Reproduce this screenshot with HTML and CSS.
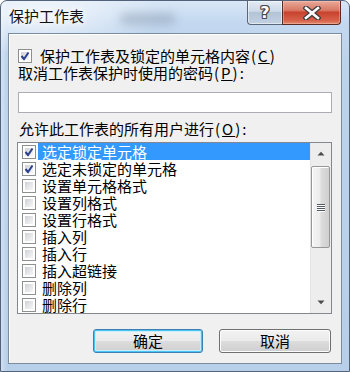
FILE: index.html
```html
<!DOCTYPE html>
<html lang="zh-CN">
<head>
<meta charset="utf-8">
<title>保护工作表</title>
<link rel="stylesheet" href="styles.css">
</head>
<body>
<div class="window">
  <div class="titlebar">
    <div class="title">保护工作表</div>
    <div class="blur-bg"></div>
    <div class="caption-btns">
      <div class="cbtn help"><span class="qm">?</span></div>
      <div class="cbtn close">
        <svg width="18" height="14" viewBox="0 0 18 14">
          <path d="M3 2 L15 12 M15 2 L3 12" stroke="#3b3b3b" stroke-width="5" stroke-linecap="square" fill="none"/>
          <path d="M3 2 L15 12 M15 2 L3 12" stroke="#ffffff" stroke-width="2.6" stroke-linecap="square" fill="none"/>
        </svg>
      </div>
    </div>
  </div>
  <div class="client">
    <div class="row-check">
      <span class="cb checked">
        <span class="cb-in"></span>
        <svg class="tick" viewBox="0 0 14 14"><path d="M3.5 7 L6 10 L10.5 3.5" stroke="#2a3f8f" stroke-width="2" fill="none"/></svg>
      </span>
      <span class="cb-text">保护工作表及锁定的单元格内容<span class="ak">(<u>C</u>)</span></span>
    </div>
    <div class="label l2">取消工作表保护时使用的密码<span class="ak">(<u>P</u>):</span></div>
    <div class="input"></div>
    <div class="label l3">允许此工作表的所有用户进行<span class="ak">(<u>O</u>):</span></div>
    <div class="listbox">
      <div class="items">
        <div class="item">
          <span class="cb checked"><span class="cb-in"></span><svg class="tick" viewBox="0 0 14 14"><path d="M3.5 7 L6 10 L10.5 3.5" stroke="#2a3f8f" stroke-width="2" fill="none"/></svg></span>
          <span class="item-text selected">选定锁定单元格</span>
        </div>
        <div class="item">
          <span class="cb checked"><span class="cb-in"></span><svg class="tick" viewBox="0 0 14 14"><path d="M3.5 7 L6 10 L10.5 3.5" stroke="#2a3f8f" stroke-width="2" fill="none"/></svg></span>
          <span class="item-text">选定未锁定的单元格</span>
        </div>
        <div class="item"><span class="cb"><span class="cb-in"></span></span><span class="item-text">设置单元格格式</span></div>
        <div class="item"><span class="cb"><span class="cb-in"></span></span><span class="item-text">设置列格式</span></div>
        <div class="item"><span class="cb"><span class="cb-in"></span></span><span class="item-text">设置行格式</span></div>
        <div class="item"><span class="cb"><span class="cb-in"></span></span><span class="item-text">插入列</span></div>
        <div class="item"><span class="cb"><span class="cb-in"></span></span><span class="item-text">插入行</span></div>
        <div class="item"><span class="cb"><span class="cb-in"></span></span><span class="item-text">插入超链接</span></div>
        <div class="item"><span class="cb"><span class="cb-in"></span></span><span class="item-text">删除列</span></div>
        <div class="item"><span class="cb"><span class="cb-in"></span></span><span class="item-text">删除行</span></div>
      </div>
      <div class="scrollbar">
        <div class="sb-arrow"><svg width="8" height="5" viewBox="0 0 8 5"><path d="M0.5 4.5 L4 0.8 L7.5 4.5 Z" fill="#4d4d4d"/></svg></div>
        <div class="sb-track">
          <div class="sb-thumb">
            <div class="grip"><i></i><i></i><i></i><i></i></div>
          </div>
        </div>
        <div class="sb-arrow"><svg width="8" height="5" viewBox="0 0 8 5"><path d="M0.5 0.5 L4 4.2 L7.5 0.5 Z" fill="#4d4d4d"/></svg></div>
      </div>
    </div>
    <div class="buttons">
      <div class="btn default"><span>确定</span></div>
      <div class="btn"><span>取消</span></div>
    </div>
  </div>
</div>
</body>
</html>
```
FILE: styles.css
```css
html, body {
  margin: 0;
  padding: 0;
  width: 350px;
  height: 372px;
  overflow: hidden;
  background: #ffffff;
}

.window {
  width: 350px;
  height: 372px;
  box-sizing: border-box;
  border: 1px solid #52627a;
  border-radius: 7px 7px 0 0;
  padding: 0 7px 7px 7px;
  display: flex;
  flex-direction: column;
  background:
    radial-gradient(ellipse 120px 40px at 40px 14px, rgba(255,255,255,0.75), rgba(255,255,255,0) 100%),
    linear-gradient(90deg, rgba(255,255,255,0.35) 0px, rgba(255,255,255,0) 6px),
    linear-gradient(180deg, #d9e7f6 0px, #c4d9f0 20px, #bcd3ec 60px, #b7cfe9 100%);
  font-family: "Noto Sans CJK SC", "Noto Sans", sans-serif;
  font-size: 15px;
  color: #000;
  position: relative;
}

.titlebar {
  height: 32px;
  display: flex;
  align-items: flex-start;
  position: relative;
}

.title {
  margin-top: 5px;
  margin-left: 1px;
  font-size: 15px;
  line-height: 20px;
  color: #111;
  text-shadow: 0 0 6px #ffffff, 0 0 10px #ffffff;
}

.blur-bg {
  position: absolute;
  left: 112px;
  top: 12px;
  width: 56px;
  height: 12px;
  background: rgba(120,135,155,0.35);
  filter: blur(4px);
  border-radius: 6px;
}

.caption-btns {
  margin-left: auto;
  display: flex;
  margin-right: 1px;
}

.cbtn {
  height: 24px;
  box-sizing: border-box;
  border: 1px solid #5a6779;
  border-top: none;
  display: flex;
  align-items: center;
  justify-content: center;
}

.help {
  width: 35px;
  border-radius: 0 0 0 4px;
  border-right: none;
  background: linear-gradient(180deg, #e3ebf4 0%, #ccd9e7 45%, #b3c4d6 50%, #c1d1e2 100%);
  box-shadow: inset 0 0 0 1px rgba(255,255,255,0.5);
}

.qm {
  font-family: "DejaVu Sans", sans-serif;
  font-weight: bold;
  font-size: 16px;
  line-height: 16px;
  color: #ffffff;
  text-shadow: 1px 0 0 #4a4a4a, -1px 0 0 #4a4a4a, 0 1px 0 #4a4a4a, 0 -1px 0 #4a4a4a,
               1px 1px 0 #4a4a4a, -1px -1px 0 #4a4a4a, 1px -1px 0 #4a4a4a, -1px 1px 0 #4a4a4a;
  margin-top: 1px;
}

.close {
  width: 59px;
  border-radius: 0 0 4px 0;
  border-color: #5b2a24;
  background: linear-gradient(180deg, #e9a999 0%, #d87a66 40%, #c8432e 50%, #d7624b 85%, #e28a6c 100%);
  box-shadow: inset 0 0 0 1px rgba(255,220,210,0.35);
}

.close svg {
  display: block;
}

.client {
  flex: 1;
  border: 1px solid #7b8ba0;
  background: #f0f0f0;
  padding: 0 9px 0 9px;
  display: flex;
  flex-direction: column;
  box-shadow: inset 1px 1px 0 #ffffff;
}

.row-check {
  margin-top: 14px;
  height: 16px;
  display: flex;
  align-items: center;
  line-height: 16px;
}

.row-check .cb {
  margin-right: 8px;
}

.cb {
  width: 14px;
  height: 14px;
  box-sizing: border-box;
  border: 1px solid #8e8f8f;
  background: #ffffff;
  padding: 2px;
  display: grid;
  flex: none;
}

.cb-in {
  grid-area: 1 / 1;
  background: linear-gradient(135deg, #cdd0d5 0%, #e4e5e8 50%, #f6f6f6 100%);
}

.tick {
  grid-area: 1 / 1;
  width: 14px;
  height: 14px;
  margin: -3px;
}

.ak {
  letter-spacing: 2px;
  margin-left: 1px;
}

.label {
  height: 17px;
  line-height: 17px;
  white-space: nowrap;
}

.l2 {
  margin-top: 0;
}

.input {
  margin-top: 11px;
  height: 21px;
  box-sizing: border-box;
  border: 1px solid #abadb3;
  border-top-color: #abadb3;
  background: #ffffff;
  width: 314px;
}

.l3 {
  margin-top: 7px;
  margin-left: 1px;
}

.listbox {
  margin-top: 5px;
  margin-left: -1px;
  width: 315px;
  height: 172px;
  box-sizing: border-box;
  border: 1px solid #828790;
  background: #ffffff;
  display: flex;
}

.items {
  flex: 1;
  display: flex;
  flex-direction: column;
}

.item {
  height: 17px;
  display: flex;
  align-items: center;
  padding-left: 4px;
}

.item .cb {
  margin-right: 2px;
}

.item-text {
  flex: 1;
  height: 17px;
  line-height: 17px;
  padding-left: 4px;
  white-space: nowrap;
}

.item-text.selected {
  background: #3399ff;
  color: #ffffff;
}

.scrollbar {
  width: 21px;
  display: flex;
  flex-direction: column;
  background: #ededed;
  border-left: 1px solid #e3e3e3;
  box-sizing: border-box;
}

.sb-arrow {
  height: 21px;
  display: flex;
  align-items: center;
  justify-content: center;
}

.sb-arrow svg {
  display: block;
}

.sb-track {
  flex: 1;
  display: flex;
  flex-direction: column;
  padding-top: 2px;
}

.sb-thumb {
  height: 82px;
  margin: 0 1px 0 0;
  box-sizing: border-box;
  border: 1px solid #979797;
  border-radius: 2px;
  background: linear-gradient(90deg, #f5f5f5 0%, #ececec 45%, #dcdcdc 55%, #cfcfcf 100%);
  box-shadow: inset 1px 1px 0 #ffffff;
  display: flex;
  align-items: center;
  justify-content: center;
}

.grip {
  display: flex;
  flex-direction: column;
  gap: 1px;
}

.grip i {
  display: block;
  width: 8px;
  height: 1px;
  background: #555b63;
  box-shadow: 0 1px 0 #ffffff;
}

.buttons {
  margin-top: 15px;
  display: flex;
  justify-content: flex-end;
  gap: 16px;
  padding-right: 1px;
}

.btn {
  width: 112px;
  height: 24px;
  box-sizing: border-box;
  border: 1px solid #707070;
  border-radius: 3px;
  background: linear-gradient(180deg, #f2f2f2 0%, #ebebeb 49%, #dddddd 50%, #cfcfcf 100%);
  box-shadow: inset 0 0 0 1px #fcfcfc;
  display: flex;
  align-items: center;
  justify-content: center;
  line-height: 18px;
}

.btn.default {
  width: 110px;
  border-color: #3c7fb1;
  box-shadow: inset 0 0 0 1px #48c4f5, inset 0 0 0 2px #c7ecfb;
}
```
